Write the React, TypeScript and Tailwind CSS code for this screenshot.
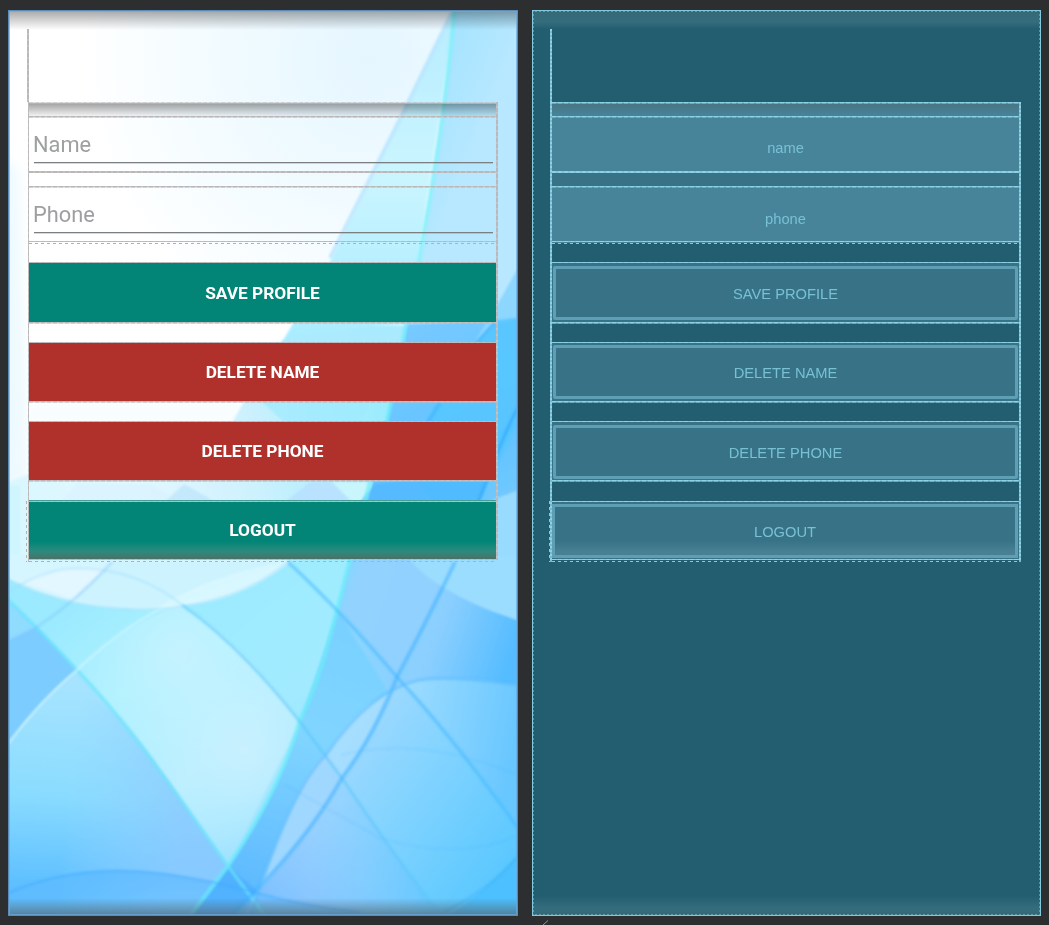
import React from "react";

const ACTIONS = [
  { label: "SAVE PROFILE", tone: "bg-[#028577]" },
  { label: "DELETE NAME", tone: "bg-[#b0302b]" },
  { label: "DELETE PHONE", tone: "bg-[#b0302b]" },
];

const GREY_LINE = "bg-[repeating-linear-gradient(90deg,#b9b7b7_0_4px,#c3c1c1_4px_6px)]";
const GREY_SOFT = "bg-[repeating-linear-gradient(90deg,#bdbbbbaa_0_4px,#c8c6c677_4px_6px)]";
const GREY_DASH = "bg-[repeating-linear-gradient(90deg,#b5b0b0_0_3px,transparent_3px_6px)]";
const GREY_VERT = "bg-[repeating-linear-gradient(180deg,#bab8b8_0_4px,#c4c2c2_4px_6px)]";
const BLUE_LINE = "bg-[repeating-linear-gradient(90deg,#8cd2e4_0_4px,#80c5d8_4px_6px)]";
const BLUE_SOFT = "bg-[repeating-linear-gradient(90deg,#68adc2_0_4px,#5497ac_4px_6px)]";
const BLUE_DASH = "bg-[repeating-linear-gradient(90deg,#86c9db_0_3px,transparent_3px_6px)]";
const BLUE_VERT = "bg-[repeating-linear-gradient(180deg,#8cd2e4_0_2px,#76bace_2px_4px)]";

function Wallpaper() {
  return (
    <svg className="absolute inset-0 h-full w-full" viewBox="8 10 510 906" preserveAspectRatio="none">
      <defs>
        <radialGradient id="sky" gradientUnits="userSpaceOnUse" cx="370" cy="60" r="290">
          <stop offset="0" stopColor="#e5f6ff" />
          <stop offset=".5" stopColor="#f1fbff" />
          <stop offset="1" stopColor="#ffffff" />
        </radialGradient>
        <linearGradient id="wedge" gradientUnits="userSpaceOnUse" x1="0" y1="12" x2="0" y2="560">
          <stop offset="0" stopColor="#b8edff" />
          <stop offset=".3" stopColor="#caf5ff" />
          <stop offset=".6" stopColor="#a9ecff" />
          <stop offset="1" stopColor="#b5eeff" />
        </linearGradient>
        <linearGradient id="east" gradientUnits="userSpaceOnUse" x1="420" y1="0" x2="518" y2="40">
          <stop offset="0" stopColor="#9be0ff" />
          <stop offset="1" stopColor="#b7e8ff" />
        </linearGradient>
        <linearGradient id="eastLow" gradientUnits="userSpaceOnUse" x1="380" y1="330" x2="500" y2="570">
          <stop offset="0" stopColor="#78caff" />
          <stop offset=".55" stopColor="#62c3ff" />
          <stop offset="1" stopColor="#7fceff" />
        </linearGradient>
        <linearGradient id="pale" gradientUnits="userSpaceOnUse" x1="8" y1="480" x2="380" y2="420">
          <stop offset="0" stopColor="#d8f7ff" />
          <stop offset=".3" stopColor="#e6f8ff" />
          <stop offset=".65" stopColor="#cdf1fe" />
          <stop offset="1" stopColor="#9cecfd" />
        </linearGradient>
        <linearGradient id="mid" gradientUnits="userSpaceOnUse" x1="60" y1="620" x2="260" y2="860">
          <stop offset="0" stopColor="#9ceaff" />
          <stop offset=".3" stopColor="#aef1ff" />
          <stop offset=".65" stopColor="#b8eeff" />
          <stop offset="1" stopColor="#9cdfff" />
        </linearGradient>
        <radialGradient id="glow" gradientUnits="userSpaceOnUse" cx="245" cy="750" r="110">
          <stop offset="0" stopColor="#cbf1ff" stopOpacity=".9" />
          <stop offset="1" stopColor="#c4f4ff" stopOpacity="0" />
        </radialGradient>
        <radialGradient id="glowTop" gradientUnits="userSpaceOnUse" cx="180" cy="655" r="110">
          <stop offset="0" stopColor="#c5f3ff" />
          <stop offset="1" stopColor="#c4f4ff" stopOpacity="0" />
        </radialGradient>
        <linearGradient id="west" gradientUnits="userSpaceOnUse" x1="70" y1="690" x2="60" y2="900">
          <stop offset="0" stopColor="#a5e3ff" />
          <stop offset=".5" stopColor="#8adcff" />
          <stop offset="1" stopColor="#58bbff" />
        </linearGradient>
        <linearGradient id="lilac" gradientUnits="userSpaceOnUse" x1="60" y1="830" x2="180" y2="850">
          <stop offset="0" stopColor="#93d2ff" stopOpacity="0" />
          <stop offset="1" stopColor="#8fcbff" />
        </linearGradient>
        <linearGradient id="band" gradientUnits="userSpaceOnUse" x1="370" y1="562" x2="250" y2="912">
          <stop offset="0" stopColor="#75cfff" />
          <stop offset=".5" stopColor="#80d5ff" />
          <stop offset="1" stopColor="#5ab6ff" />
        </linearGradient>
        <linearGradient id="upperRight" gradientUnits="userSpaceOnUse" x1="370" y1="590" x2="518" y2="640">
          <stop offset="0" stopColor="#8ad5ff" />
          <stop offset=".5" stopColor="#8bcfff" />
          <stop offset="1" stopColor="#54bcff" />
        </linearGradient>
        <linearGradient id="dome" gradientUnits="userSpaceOnUse" x1="300" y1="730" x2="518" y2="890">
          <stop offset="0" stopColor="#abdcff" />
          <stop offset=".45" stopColor="#84d4ff" />
          <stop offset="1" stopColor="#54c6ff" />
        </linearGradient>
        <linearGradient id="domeEdge" gradientUnits="userSpaceOnUse" x1="410" y1="700" x2="518" y2="720">
          <stop offset="0" stopColor="#9adbff" />
          <stop offset="1" stopColor="#69c7ff" />
        </linearGradient>
        <linearGradient id="south" gradientUnits="userSpaceOnUse" x1="260" y1="890" x2="360" y2="780">
          <stop offset="0" stopColor="#80c2ff" />
          <stop offset="1" stopColor="#aadcff" />
        </linearGradient>
        <linearGradient id="southFade" gradientUnits="userSpaceOnUse" x1="310" y1="0" x2="430" y2="0">
          <stop offset="0" stopColor="#6ccaff" stopOpacity="0" />
          <stop offset="1" stopColor="#66c8ff" />
        </linearGradient>
        <linearGradient id="floor" gradientUnits="userSpaceOnUse" x1="0" y1="865" x2="0" y2="912">
          <stop offset="0" stopColor="#56b6ff" />
          <stop offset="1" stopColor="#68c2ff" />
        </linearGradient>
        <filter id="soft" x="-5%" y="-5%" width="110%" height="110%">
          <feGaussianBlur stdDeviation=".8" />
        </filter>
        <filter id="lineSoft" x="-5%" y="-5%" width="110%" height="110%">
          <feGaussianBlur stdDeviation="1.1" />
        </filter>
        <filter id="wide" x="-100%" y="-20%" width="300%" height="140%">
          <feGaussianBlur stdDeviation="6" />
        </filter>
      </defs>
      <rect x="8" y="10" width="510" height="906" fill="url(#sky)" />
      <path d="M-10 140L18 170L30 500H-10Z" fill="#eefaff" filter="url(#wide)" />
      <path d="M30 400H240V500H30Z" fill="#f8fdff" filter="url(#wide)" />
      <g filter="url(#soft)">
        <path d="M-5 490Q22 474 40 472L190 462L233 421L243 403L282 342Q345 322 420 326V620H-5Z" fill="url(#pale)" />
        <path d="M60 502L78 482L150 484L178 500L190 520H40Z" fill="#d8f2ff" opacity=".7" />
        <path d="M166 501L184 484L216 502Z" fill="#b9e2fb" opacity=".65" />
        <path d="M262 402L284 422L360 422L400 340Q340 322 282 340Z" fill="#9eeafd" opacity=".7" />
        <path d="M282 342L330 328L407 326L404 344H270Z" fill="#b2e9ff" opacity=".6" />
        <path d="M285 502L310 482H332L352 502Z" fill="#b8e2ff" />
        <path d="M332 482H373L366 502H352Z" fill="#c9f6fc" />
        <path d="M454 10L407 107L330 262L282 342Q345 325 408 324L455 10Z" fill="url(#wedge)" />
        <path d="M455 10Q440 170 407 324Q390 425 371 482Q355 550 337 610L530 700V0Z" fill="url(#east)" />
        <path d="M407 324Q465 322 497 320L530 315V640L337 610Q370 510 407 324Z" fill="url(#eastLow)" />
        <path d="M518 268L497 305L470 350L497 323L530 317V268Z" fill="#8dd7ff" />
        <path d="M497 320L530 316V400L480 500L462 540L400 460L427 420Q455 360 497 320Z" fill="#55c5ff" opacity=".8" />
        <path d="M374 484L360 502H480L491 470Z" fill="#4fb7ff" opacity=".7" />
        <path d="M530 486L497 498L462 520L450 562L518 620H530Z" fill="#98dbff" />

        <path d="M0 486V640H350L352 555H20V486Z" fill="#cdf4ff" opacity=".8" />
        <path d="M0 575C90 624 220 622 290 560L350 560Q330 640 300 720Q280 790 228 866L100 710L0 590Z" fill="url(#mid)" />
        <path d="M0 575C90 624 220 622 290 560V555H0Z" fill="#d6f6ff" />
        <path d="M73 599L112 562H290Q220 612 160 611Q110 610 73 599Z" fill="#c3effe" opacity=".45" />
        <path d="M20 582Q65 562 105 569L73 599Z" fill="#e5f8ff" opacity=".8" />
        <path d="M155 609Q210 575 283 562H290Q238 605 155 609Z" fill="#dcf8ff" opacity=".8" />
        <path d="M290 562L337 610Q318 675 300 722Q240 640 182 605Q238 603 290 562Z" fill="#92e7ff" opacity=".6" />
        <path d="M77 670Q130 620 182 605Q240 645 300 722L228 866Q150 760 77 670Z" fill="url(#glowTop)" />
        <path d="M77 670Q130 620 182 605Q240 645 300 722L228 866Q150 760 77 670Z" fill="url(#glow)" />
        <path d="M0 592Q22 612 37 627L0 645Z" fill="#90dcff" />
        <path d="M0 645L37 627L77 670Q35 705 0 755Z" fill="#7dccff" />
        <path d="M77 670Q40 700 0 755V920H265L228 866C170 785 130 725 77 670Z" fill="url(#west)" />
        <path d="M77 690L60 920H265L228 866C185 806 150 750 120 717Z" fill="url(#lilac)" opacity=".8" />
        <path d="M351 558Q330 640 300 720Q280 790 228 866L190 920H260L342 790L405 690V660L337 610L370 560Z" fill="url(#band)" />
        <path d="M351 558L288 560L337 610Z" fill="#9fecff" />
        <path d="M350 558H408Q450 605 530 622V695L450 679Q420 679 390 694L337 610Z" fill="url(#upperRight)" />
        <path d="M360 558H408L440 587L397 677L342 610Z" fill="#96d0ff" opacity=".6" />
        <path d="M408 558Q440 597 530 624V556Z" fill="#9bddff" />
        <path d="M250 920Q290 790 326 755Q370 690 420 680Q455 675 530 687V920Z" fill="url(#dome)" />
        <path d="M404 683Q450 673 530 687V840L480 772Q440 720 404 683Z" fill="url(#domeEdge)" />
        <path d="M250 920Q290 790 325 754L342 778Q305 845 258 890Z" fill="#a0d7ff" opacity=".85" />
        <path d="M326 755Q355 708 386 695Q370 738 342 778Z" fill="#a8dfff" opacity=".75" />
        <path d="M258 890Q300 845 342 778Q390 850 443 920H240Z" fill="url(#south)" />
        <path d="M258 890Q300 845 342 778Q390 850 443 920H240Z" fill="url(#southFade)" />
        <path d="M530 840Q500 880 444 920H530Z" fill="#4dc0ff" />
        <path d="M0 897C80 858 160 868 250 891Q300 906 360 912V920H0Z" fill="url(#floor)" opacity=".6" />
        <path d="M228 866L190 915H235L257 890Z" fill="#4caeff" opacity=".7" />
      </g>
      <g fill="none" filter="url(#lineSoft)">
        <path d="M452 12L405 109L330 258" stroke="#a4ddff" strokeWidth="4" opacity=".6" />
        <path d="M454.500 10Q439 170 406 324Q389 425 370 482Q350 560 337 610Q320 680 300 720Q280 790 228 866L190 916" stroke="#6aeefa" strokeWidth="4" opacity=".7" />
        <path d="M497 320L470 350M440 403L420 435" stroke="#46b3ff" strokeWidth="3" opacity=".7" />
        <path d="M522 400Q505 430 491 470L478 502" stroke="#34adff" strokeWidth="3" opacity=".8" />
        <path d="M0 592Q40 630 77 670C130 725 170 785 228 866L265 916" stroke="#68e5fa" strokeWidth="3.5" opacity=".65" />
        <path d="M0 755Q35 705 77 670Q130 620 175 603Q225 580 280 563" stroke="#d4f8ff" strokeWidth="2.5" opacity=".6" />
        <path d="M0 598Q40 568 80 568Q140 570 182 605" stroke="#98dcfa" strokeWidth="2.5" opacity=".35" />
        <path d="M182 605Q240 645 300 722L342 778Q390 850 444 920" stroke="#58c5fa" strokeWidth="3" opacity=".5" />
        <path d="M288 562Q340 610 397 677Q460 745 530 845" stroke="#43b7ff" strokeWidth="3.5" opacity=".5" />
        <path d="M455 562Q425 625 397 677Q375 735 342 778Q305 845 230 916" stroke="#43b2ff" strokeWidth="4" opacity=".55" />
        <path d="M250 920Q290 790 326 755Q370 690 420 680Q455 675 530 687" stroke="#58baff" strokeWidth="3" opacity=".5" />
        <path d="M0 645L37 627Q78 600 112 562" stroke="#72bdf7" strokeWidth="3" opacity=".3" />
        <path d="M0 575C90 624 220 622 290 560" stroke="#89d9fa" strokeWidth="2" opacity=".35" />
        <path d="M0 897C80 858 160 868 250 891Q300 906 360 912" stroke="#3ca7ff" strokeWidth="2.5" opacity=".4" />
        <path d="M530 840Q500 885 444 912" stroke="#3caef5" strokeWidth="2.5" opacity=".4" />
        <path d="M342 755Q420 735 518 775M285 785L380 838Q460 862 518 835" stroke="#3caef5" strokeWidth="1.5" opacity=".15" />
      </g>
    </svg>
  );
}

function PreviewField({ hint }: { hint: string }) {
  return (
    <div className="flex h-[53px] flex-col px-[5px]">
      <div className="ml-[-1px] flex h-[44px] items-end pb-px text-[21.8px] leading-[33px] text-[#9d9fa0]">{hint}</div>
      <div className="mr-[-2px] h-px shrink-0 bg-[#7b7f82]" />
      <div className="mr-[-2px] h-px shrink-0 bg-[#7b7f82]/30" />
    </div>
  );
}

function Preview() {
  return (
    <section className="relative h-[906px] w-[510px] shrink-0 overflow-hidden font-['Roboto',sans-serif]">
      <Wallpaper />
      <div className="absolute inset-x-0 top-0 h-[20px] bg-gradient-to-b from-black/35 to-transparent" />
      <div className="absolute inset-x-0 bottom-0 h-[18px] bg-gradient-to-t from-[#526773]/75 to-transparent" />
      <div className="absolute inset-0 border border-[#5b8cb8]" />
      <div className="absolute inset-px border border-[#6ba8e0]/70" />
      <div className="relative ml-[20px] flex w-[470px] flex-col pt-[19px]">
        <div className={`ml-[-1px] h-[73px] w-[2px] ${GREY_VERT}`} />
        <div className="flex">
          <div className={`w-px shrink-0 ${GREY_VERT}`} />
          <div className="flex w-[467px] flex-col">
            <div className={`h-px ${GREY_SOFT}`} />
            <div className="h-px bg-[#b5b3b2]" />
            <div className="h-[12px] bg-gradient-to-b from-black/35 to-black/5" />
            <div className={`h-px ${GREY_LINE}`} />
            <div className={`h-px ${GREY_SOFT}`} />
            <PreviewField hint="Name" />
            <div className={`h-px ${GREY_LINE}`} />
            <div className={`h-px ${GREY_LINE}`} />
            <div className="h-[13px]" />
            <div className={`h-px ${GREY_LINE}`} />
            <div className={`h-px ${GREY_SOFT}`} />
            <PreviewField hint="Phone" />
            <div className={`h-px ${GREY_LINE}`} />
            <div className="h-px" />
            <div className={`h-px ${GREY_DASH}`} />
            <div className="h-[18px]" />
            {ACTIONS.map((a, i) => (
              <React.Fragment key={a.label}>
                <div className={`h-px ${GREY_LINE}`} />
                <div className={`flex items-center justify-center pt-[2px] text-[17.3px] font-bold text-white ${a.tone} ${i === 0 ? "h-[59px]" : "h-[58px]"}`}>
                  {a.label}
                </div>
                <div className={`h-px ${GREY_LINE}`} />
                <div className={`h-px ${GREY_SOFT}`} />
                <div className="h-[18px]" />
              </React.Fragment>
            ))}
            <div className="h-px bg-[#4a9d94]" />
            <div className={`h-px ${GREY_LINE}`} />
            <div className="flex h-[57px] items-center justify-center bg-[linear-gradient(180deg,#028577_0_40px,#2b8b7e_49px,#4a7268_57px)] pt-px text-[17.3px] font-bold text-white">
              LOGOUT
            </div>
            <div className={`h-px ${GREY_LINE}`} />
            <div className="h-px" />
            <div className={`h-px ${GREY_DASH}`} />
          </div>
          <div className={`mb-[2px] w-[2px] ${GREY_VERT}`} />
        </div>
      </div>
      <div className="absolute left-[18px] top-[491px] h-[61px] w-px bg-[repeating-linear-gradient(180deg,#b5b0b0_0_3px,transparent_3px_6px)]" />
    </section>
  );
}

function Blueprint() {
  return (
    <section className="relative h-[906px] w-[509px] shrink-0 bg-[#235d70] font-['Liberation_Sans',sans-serif] text-[14.7px] text-[#78c0d4]">
      <div className="absolute inset-x-0 top-0 h-[19px] bg-[linear-gradient(180deg,#366876_0,#346d7d_12px,#235d70_19px)]" />
      <div className="absolute inset-x-0 bottom-0 h-[20px] bg-[linear-gradient(0deg,#366876_0,#346d7d_8px,#235d70_20px)]" />
      <div className="absolute inset-0 border border-[#81c9dc]" />
      <div className="absolute inset-0 border-2 border-dotted border-[#81c9dc]/50" />
      <div className="relative ml-[19px] flex w-[471px] flex-col pt-[19px]">
        <div className={`ml-[-1px] h-[73px] w-[2px] ${BLUE_VERT}`} />
        <div className="flex">
          <div className={`ml-[-1px] w-[2px] shrink-0 ${BLUE_VERT}`} />
          <div className="flex w-[467px] flex-col">
            <div className={`h-px ${BLUE_LINE}`} />
            <div className={`h-px ${BLUE_SOFT}`} />
            <div className="h-[12px] bg-gradient-to-b from-[#487685] to-[#45849a]" />
            <div className={`h-px ${BLUE_LINE}`} />
            <div className={`h-px ${BLUE_SOFT}`} />
            <div className="flex h-[53px] items-center justify-center bg-[#47849a] pt-[8px]">name</div>
            <div className={`h-px ${BLUE_LINE}`} />
            <div className={`h-px ${BLUE_LINE}`} />
            <div className="h-[13px] bg-[#377286]" />
            <div className={`h-px ${BLUE_LINE}`} />
            <div className={`h-px ${BLUE_SOFT}`} />
            <div className="flex h-[53px] items-center justify-center bg-[#47849a] pt-[9px]">phone</div>
            <div className={`h-px ${BLUE_LINE}`} />
            <div className="h-px bg-[#47849a]" />
            <div className={`h-px ${BLUE_DASH}`} />
            <div className="h-[18px]" />
            {ACTIONS.map((a, i) => (
              <React.Fragment key={a.label}>
                <div className={`h-px ${BLUE_LINE}`} />
                <div className={`flex flex-col bg-[#377286] px-px ${i === 0 ? "h-[59px] pb-[2px] pt-[3px]" : i === 1 ? "h-[58px] pb-[2px] pt-[2px]" : "h-[58px] pb-[1px] pt-[3px]"}`}>
                  <div className="flex flex-1 items-center justify-center rounded-[2px] border-[3px] border-[#5e9fb5] bg-[#377286] pt-[2px]">{a.label}</div>
                </div>
                <div className={`h-px ${BLUE_LINE}`} />
                <div className={`h-px ${BLUE_SOFT}`} />
                <div className="h-[18px]" />
              </React.Fragment>
            ))}
            <div className="h-px" />
            <div className={`h-px ${BLUE_LINE}`} />
            <div className="flex h-[57px] flex-col bg-[#377286] pb-px pr-px pt-[2px]">
              <div className="flex flex-1 items-center justify-center border-[3px] border-[#5e9fb5] bg-[linear-gradient(180deg,#377286_0_34px,#488093_44px,#4a7f91_50px)] pt-[2px]">
                LOGOUT
              </div>
            </div>
            <div className={`h-px ${BLUE_LINE}`} />
            <div className="h-px" />
            <div className={`h-px ${BLUE_DASH}`} />
          </div>
          <div className={`w-[2px] ${BLUE_VERT}`} />
        </div>
      </div>
      <div className="absolute left-[17px] top-[491px] h-[61px] w-px bg-[repeating-linear-gradient(180deg,#81c9dc_0_3px,transparent_3px_6px)]" />
    </section>
  );
}

export default function App() {
  return (
    <main className="relative flex h-[925px] w-[1049px] gap-[14px] overflow-hidden bg-[#2d2e30] pl-[8px] pt-[10px]">
      <Preview />
      <Blueprint />
      <svg className="absolute bottom-0 left-[542px] h-[5px] w-[6px]" viewBox="0 0 6 5">
        <path d="M1 5L6 .5" stroke="#929496" strokeWidth="1" />
      </svg>
    </main>
  );
}
